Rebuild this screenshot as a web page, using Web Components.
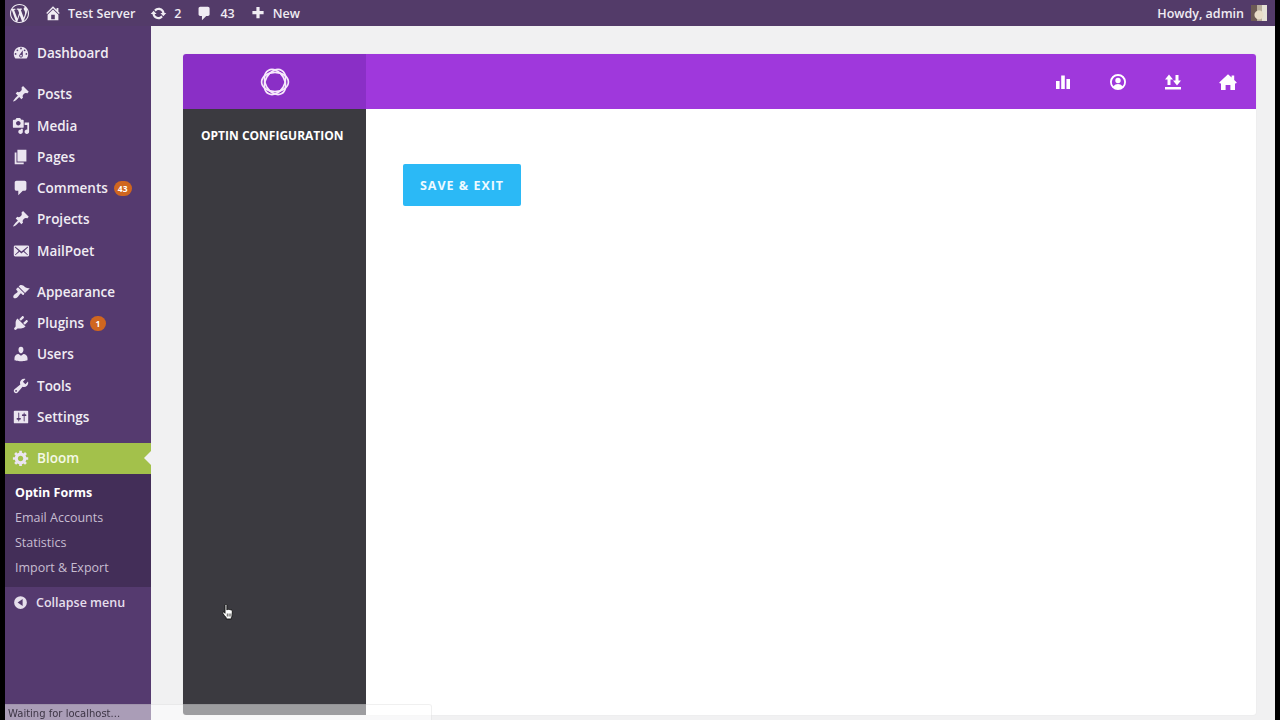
<!DOCTYPE html>
<html>
<head>
<meta charset="utf-8">
<title>Bloom - Optin Forms</title>
<style>
html, body { margin: 0; height: 100%; }
body { background: #000; overflow: hidden; }
</style>
</head>
<body>
<wp-shell>
  <wp-adminbar slot="bar"></wp-adminbar>
  <wp-sidemenu slot="menu"></wp-sidemenu>
  <bloom-panel slot="main"></bloom-panel>
</wp-shell>
<status-tip>Waiting for localhost...</status-tip>
<hand-cursor></hand-cursor>

<script>
const ICONS = {
  wp: 'M20 10c0-5.51-4.49-10-10-10C4.48 0 0 4.49 0 10c0 5.52 4.48 10 10 10 5.51 0 10-4.48 10-10zM7.78 15.37L4.37 6.22c.55-.02 1.17-.08 1.17-.08.5-.06.44-1.13-.06-1.11 0 0-1.45.11-2.37.11-.18 0-.37 0-.58-.01C4.12 2.69 6.87 1.11 10 1.11c2.33 0 4.45.87 6.05 2.34-.68-.11-1.65.39-1.65 1.58 0 .74.45 1.36.9 2.1.35.61.55 1.36.55 2.46 0 1.49-1.4 5-1.4 5l-3.03-8.37c.54-.02.82-.17.82-.17.5-.05.44-1.25-.06-1.22 0 0-1.44.12-2.38.12-.87 0-2.33-.12-2.33-.12-.5-.03-.56 1.2-.06 1.22l.92.08 1.26 3.41zM17.41 10c.24-.64.74-1.87.43-4.25.7 1.29 1.05 2.71 1.05 4.25 0 3.29-1.73 6.24-4.4 7.78.97-2.59 1.94-5.2 2.92-7.78zM6.1 18.09C3.12 16.65 1.11 13.53 1.11 10c0-1.3.23-2.48.72-3.59C3.25 10.3 4.67 14.2 6.1 18.09zm4.03-6.63l2.58 6.98c-.86.29-1.76.45-2.71.45-.79 0-1.57-.11-2.29-.33.81-2.38 1.62-4.74 2.42-7.1z',
  home: 'M16 8.5l1.53 1.53-1.06 1.06L10 4.62l-6.47 6.47-1.06-1.06L10 2.5l4 4v-2h2v4zm-6-2.46l6 5.99V18H4v-5.97zM12 17v-5H8v5h4z',
  update: 'M10.2 3.28c3.53 0 6.43 2.61 6.92 6h2.08l-3.5 4-3.5-4h2.32c-.45-1.97-2.21-3.45-4.32-3.45-1.45 0-2.73.71-3.54 1.78L4.95 5.66C6.23 4.2 8.11 3.28 10.2 3.28zm-.4 13.44c-3.52 0-6.43-2.61-6.92-6H.8l3.5-4c1.17 1.33 2.33 2.67 3.5 4H5.48c.45 1.97 2.21 3.45 4.32 3.45 1.45 0 2.73-.71 3.54-1.78l1.71 1.95c-1.28 1.46-3.15 2.38-5.25 2.38z',
  comment: 'M5 2h9c1.1 0 2 .9 2 2v7c0 1.1-.9 2-2 2h-2l-5 5v-5H5c-1.1 0-2-.9-2-2V4c0-1.1.9-2 2-2z',
  plus: 'M17 7.5v4h-5v5H8v-5H3v-4h5v-5h4v5z',
  dashboard: 'M3.76 16h12.48c1.1-1.37 1.76-3.11 1.76-5 0-4.42-3.58-8-8-8s-8 3.58-8 8c0 1.89.66 3.63 1.76 5zM10 4c.55 0 1 .45 1 1s-.45 1-1 1-1-.45-1-1 .45-1 1-1zM6 6c.55 0 1 .45 1 1s-.45 1-1 1-1-.45-1-1 .45-1 1-1zm8 0c.55 0 1 .45 1 1s-.45 1-1 1-1-.45-1-1 .45-1 1-1zm-5.37 5.55L12 7v6c0 1.1-.9 2-2 2s-2-.9-2-2c0-.57.24-1.08.63-1.45zM4 10c.55 0 1 .45 1 1s-.45 1-1 1-1-.45-1-1 .45-1 1-1zm12 0c.55 0 1 .45 1 1s-.45 1-1 1-1-.45-1-1 .45-1 1-1zm-5 3c0-.55-.45-1-1-1s-1 .45-1 1 .45 1 1 1 1-.45 1-1z',
  pin: 'M10.44 3.02l1.82-1.82 6.36 6.35-1.83 1.82c-1.05-.68-2.48-.57-3.41.36l-.75.75c-.92.93-1.04 2.35-.35 3.41l-1.83 1.82-2.41-2.41-2.8 2.79c-.42.42-3.38 2.71-3.8 2.29s1.86-3.39 2.28-3.81l2.79-2.79L4.1 9.36l1.83-1.82c1.05.69 2.48.57 3.4-.36l.75-.75c.93-.92 1.05-2.35.36-3.41z',
  media: 'M13 11V4c0-.55-.45-1-1-1h-1.67L9 1H5L3.67 3H2c-.55 0-1 .45-1 1v7c0 .55.45 1 1 1h10c.55 0 1-.45 1-1zM7 4.5c1.38 0 2.5 1.12 2.5 2.5S8.38 9.5 7 9.5 4.5 8.38 4.5 7 5.62 4.5 7 4.5zM14 6h5v10.5c0 1.38-1.12 2.5-2.5 2.5S14 17.88 14 16.5s1.12-2.5 2.5-2.5c.17 0 .34.02.5.05V9h-3V6zm-4 8.05V13h2v3.5c0 1.38-1.12 2.5-2.5 2.5S7 17.88 7 16.5 8.12 14 9.5 14c.17 0 .34.02.5.05z',
  page: 'M6 15V2h10v13H6zm-1 1h8v2H3V5h2v11z',
  mail: 'M19 14.5v-9c0-.83-.67-1.5-1.5-1.5H3.49c-.83 0-1.5.67-1.5 1.5v9c0 .83.67 1.5 1.5 1.5H17.5c.83 0 1.5-.67 1.5-1.5zm-1.31-9.11c.33.33.15.67-.03.84L13.6 9.95l3.9 4.06c.12.14.2.36.06.51-.13.16-.43.15-.56.05l-4.37-3.73-2.14 1.95-2.13-1.95-4.37 3.73c-.13.1-.43.11-.56-.05-.14-.15-.06-.37.06-.51l3.9-4.06-4.06-3.72c-.18-.17-.36-.51-.03-.84s.67-.17.95.07l6.24 5.04 6.25-5.04c.28-.24.62-.4.95-.07z',
  brush: 'M14.48 11.06L7.41 3.99l1.5-1.5c.5-.56 2.3-.47 3.51.32 1.21.8 1.43 1.28 2.91 2.1 1.18.64 2.45 1.26 4.45.85zm-.71.71L6.7 4.7 4.93 6.47c-.39.39-.39 1.02 0 1.41l1.06 1.06c.39.39.39 1.03 0 1.42-.6.6-1.43 1.11-2.21 1.69-.35.26-.7.53-1.01.84C1.43 13.71.96 15.65 1.91 16.6c.95.95 2.89.48 4.71-1.36.3-.3.58-.65.84-1 .58-.79 1.09-1.61 1.69-2.21.39-.39 1.02-.39 1.41 0l1.06 1.06c.39.39 1.02.39 1.41 0z',
  plug: 'M13.11 4.36L9.87 7.6 8 5.73l3.24-3.24c.35-.34 1.05-.2 1.56.32.52.51.66 1.21.31 1.55zm-8 1.77l.91-1.12 9.01 9.01-1.19.84c-.71.71-2.63 1.16-3.82 1.16H6.14L4.9 17.26c-.59.59-1.54.59-2.12 0-.59-.58-.59-1.53 0-2.12l1.24-1.24v-3.88c0-1.13.4-3.19 1.09-3.89zm7.26 3.97l3.24-3.24c.34-.35 1.04-.21 1.55.31.52.51.66 1.21.31 1.55l-3.24 3.25z',
  users: 'M10 9.25c-2.27 0-2.73-3.44-2.73-3.44C7 4.02 7.82 2 9.97 2c2.16 0 2.98 2.02 2.71 3.81 0 0-.41 3.44-2.68 3.44zm0 2.57L12.72 10c2.39 0 4.52 2.33 4.52 4.53v2.49s-3.65 1.13-7.24 1.13c-3.65 0-7.24-1.13-7.24-1.13v-2.49c0-2.25 1.94-4.48 4.47-4.48z',
  tools: 'M16.68 9.77c-1.34 1.34-3.3 1.67-4.95.99l-5.41 6.52c-.99.99-2.59.99-3.58 0s-.99-2.59 0-3.57l6.52-5.42c-.68-1.65-.35-3.61.99-4.95 1.28-1.28 3.12-1.62 4.72-1.06l-2.89 2.89 2.82 2.82 2.86-2.87c.53 1.58.18 3.39-1.08 4.65zM3.81 16.21c.4.39 1.04.39 1.43 0 .4-.4.4-1.04 0-1.43-.39-.4-1.03-.4-1.43 0-.39.39-.39 1.03 0 1.43z',
  settings: 'M18 16V4c0-.55-.45-1-1-1H3c-.55 0-1 .45-1 1v12c0 .55.45 1 1 1h14c.55 0 1-.45 1-1zM8 11h1c.55 0 1 .45 1 1s-.45 1-1 1H8v1.5c0 .28-.22.5-.5.5s-.5-.22-.5-.5V13H6c-.55 0-1-.45-1-1s.45-1 1-1h1V5.5c0-.28.22-.5.5-.5s.5.22.5.5V11zm5-2h-1c-.55 0-1-.45-1-1s.45-1 1-1h1V5.5c0-.28.22-.5.5-.5s.5.22.5.5V7h1c.55 0 1 .45 1 1s-.45 1-1 1h-1v5.5c0 .28-.22.5-.5.5s-.5-.22-.5-.5V9z',
  gear: 'M18 12h-2.18c-.17.7-.44 1.35-.81 1.93l1.54 1.54-2.1 2.1-1.54-1.54c-.58.36-1.23.63-1.91.79V19H8v-2.18c-.68-.16-1.33-.43-1.91-.79l-1.54 1.54-2.12-2.12 1.54-1.54c-.36-.58-.63-1.23-.79-1.91H1V9.03h2.17c.16-.7.44-1.35.8-1.94L2.43 5.55l2.1-2.1 1.54 1.54c.58-.37 1.24-.64 1.93-.81V2h3v2.18c.68.16 1.33.43 1.91.79l1.54-1.54 2.12 2.12-1.54 1.54c.36.59.64 1.24.8 1.94H18V12zm-8.5 1.5c1.66 0 3-1.34 3-3s-1.34-3-3-3-3 1.34-3 3 1.34 3 3 3z',
  collapse: 'M10 2.5a7.5 7.5 0 1 1 0 15 7.5 7.5 0 0 1 0-15zM12.5 5.8L6.6 10l5.9 4.2z',
  stats: 'M3 9h3.6v8H3zM8.2 3.5h3.6V17H8.2zM13.4 7h3.6v10h-3.6z',
  account: 'M10 2a8 8 0 1 1 0 16 8 8 0 0 1 0-16zm0 1.9a6.1 6.1 0 0 0-4.3 10.4c.9-1.5 2.5-2.3 4.3-2.3s3.4.8 4.3 2.3A6.1 6.1 0 0 0 10 3.9zm0 1.9a2.7 2.7 0 1 1 0 5.4 2.7 2.7 0 0 1 0-5.4z',
  updown: 'M6 2.5l4 5H7.5V13h-3V7.5H2zM14 13.5l-4-5h2.5V3h3v5.5H18zM2 15h16v2.6H2z',
  house: 'M10 2.2l3.6 3.4V3.6h2.6v4.5l2.6 2.5-1 1.1-.8-.6V18h-4.6v-5H7.6v5H3v-6.9l-.8.6-1-1.1z'
};

class WpIcon extends HTMLElement {
  connectedCallback() {
    const size = this.getAttribute('size') || 20;
    const d = ICONS[this.getAttribute('name')];
    this.attachShadow({ mode: 'open' });
    this.shadowRoot.innerHTML = `
      <style>
        :host { display: inline-flex; flex: none; width: ${size}px; height: ${size}px; color: inherit; }
        svg { width: 100%; height: 100%; display: block; fill: currentColor; }
      </style>
      <svg viewBox="0 0 20 20"><path fill-rule="evenodd" d="${d}"/></svg>`;
  }
}
customElements.define('wp-icon', WpIcon);

class WpShell extends HTMLElement {
  connectedCallback() {
    this.attachShadow({ mode: 'open' });
    this.shadowRoot.innerHTML = `
      <style>
        :host {
          display: grid;
          grid-template-columns: 146px 1fr;
          grid-template-rows: 26px 1fr;
          height: 720px;
          margin: 0 5px;
          background: #f1f1f2;
          font-family: "Open Sans", sans-serif;
        }
        .bar { grid-column: 1 / 3; display: flex; }
        .menu { display: flex; }
        .main { display: flex; min-width: 0; }
      </style>
      <div class="bar"><slot name="bar"></slot></div>
      <div class="menu"><slot name="menu"></slot></div>
      <div class="main"><slot name="main"></slot></div>`;
  }
}
customElements.define('wp-shell', WpShell);

class WpAdminbar extends HTMLElement {
  connectedCallback() {
    this.attachShadow({ mode: 'open' });
    this.shadowRoot.innerHTML = `
      <style>
        :host {
          display: flex;
          flex: 1;
          align-items: center;
          background: #533b69;
          color: #f0ecf3;
          font: 600 12.5px "Open Sans", sans-serif;
          padding: 0 8px 0 5px;
        }
        .it { display: flex; align-items: center; gap: 6px; white-space: nowrap; }
        .wp { margin-right: 15px; }
        .site { margin-right: 15px; gap: 6px; }
        .upd { margin-right: 15px; gap: 7px; }
        .com { margin-right: 15px; gap: 7px; }
        .new { gap: 7px; }
        .who { margin-left: auto; gap: 7px; }
        .avatar {
          width: 16px; height: 16px;
          background:
            radial-gradient(circle at 50% 62%, #e8dcc8 0 4px, transparent 5px),
            linear-gradient(90deg, #6d5a55 0 35%, #b9ad9c 35% 70%, #e6e1d6 70%);
        }
      </style>
      <div class="it wp"><wp-icon name="wp" size="19"></wp-icon></div>
      <div class="it site"><wp-icon name="home" size="18"></wp-icon><span>Test Server</span></div>
      <div class="it upd"><wp-icon name="update" size="17"></wp-icon><span>2</span></div>
      <div class="it com"><wp-icon name="comment" size="17"></wp-icon><span>43</span></div>
      <div class="it new"><wp-icon name="plus" size="16"></wp-icon><span>New</span></div>
      <div class="it who"><span>Howdy, admin</span><div class="avatar"></div></div>`;
  }
}
customElements.define('wp-adminbar', WpAdminbar);

class WpMenuItem extends HTMLElement {
  connectedCallback() {
    const badge = this.getAttribute('badge');
    const current = this.hasAttribute('current');
    this.attachShadow({ mode: 'open' });
    this.shadowRoot.innerHTML = `
      <style>
        :host {
          display: flex;
          align-items: center;
          position: relative;
          height: 31.25px;
          padding-left: 7px;
          color: #f0ecf3;
          font: 600 13.5px "Open Sans", sans-serif;
          white-space: nowrap;
        }
        :host([current]) { background: #a3c14b; color: #f4f8e6; }
        :host([gap]) { margin-bottom: 10px; }
        wp-icon { margin-right: 7px; color: #ebe5f0; }
        .badge {
          margin-left: 6px;
          min-width: 8px;
          height: 15px;
          padding: 0 4px;
          border-radius: 8px;
          background: #d0661f;
          color: #fff;
          font: 700 8.5px/15px "Open Sans", sans-serif;
          text-align: center;
        }
        .arrow {
          position: absolute;
          right: 0; top: 50%;
          margin-top: -7px;
          border: 7px solid transparent;
          border-right-color: #f1f1f2;
          border-left-width: 0;
        }
      </style>
      <wp-icon name="${this.getAttribute('icon')}" size="18"></wp-icon>
      <slot></slot>
      ${badge ? `<span class="badge">${badge}</span>` : ''}
      ${current ? '<span class="arrow"></span>' : ''}`;
  }
}
customElements.define('wp-menu-item', WpMenuItem);

class WpSubmenu extends HTMLElement {
  connectedCallback() {
    this.attachShadow({ mode: 'open' });
    this.shadowRoot.innerHTML = `
      <style>
        :host {
          display: block;
          background: #432e58;
          padding: 6px 0 7.5px;
          font: 400 12.5px "Open Sans", sans-serif;
          color: #c7bdd1;
        }
        .row { height: 25px; line-height: 25px; padding-left: 10px; white-space: nowrap; }
        .on { color: #fff; font-weight: 700; }
      </style>
      <div class="row on">Optin Forms</div>
      <div class="row">Email Accounts</div>
      <div class="row">Statistics</div>
      <div class="row">Import &amp; Export</div>`;
  }
}
customElements.define('wp-submenu', WpSubmenu);

class WpSidemenu extends HTMLElement {
  connectedCallback() {
    this.attachShadow({ mode: 'open' });
    this.shadowRoot.innerHTML = `
      <style>
        :host {
          display: block;
          flex: 1;
          background: #553a6f;
          padding-top: 11.5px;
        }
        .collapse {
          display: flex;
          align-items: center;
          gap: 7px;
          height: 31px;
          padding-left: 7px;
          color: #e6dfec;
          font: 600 12.5px "Open Sans", sans-serif;
        }
      </style>
      <wp-menu-item icon="dashboard" gap>Dashboard</wp-menu-item>
      <wp-menu-item icon="pin">Posts</wp-menu-item>
      <wp-menu-item icon="media">Media</wp-menu-item>
      <wp-menu-item icon="page">Pages</wp-menu-item>
      <wp-menu-item icon="comment" badge="43">Comments</wp-menu-item>
      <wp-menu-item icon="pin">Projects</wp-menu-item>
      <wp-menu-item icon="mail" gap>MailPoet</wp-menu-item>
      <wp-menu-item icon="brush">Appearance</wp-menu-item>
      <wp-menu-item icon="plug" badge="1">Plugins</wp-menu-item>
      <wp-menu-item icon="users">Users</wp-menu-item>
      <wp-menu-item icon="tools">Tools</wp-menu-item>
      <wp-menu-item icon="settings" gap>Settings</wp-menu-item>
      <wp-menu-item icon="gear" current>Bloom</wp-menu-item>
      <wp-submenu></wp-submenu>
      <div class="collapse"><wp-icon name="collapse" size="17"></wp-icon><span>Collapse menu</span></div>`;
  }
}
customElements.define('wp-sidemenu', WpSidemenu);

class BloomPanel extends HTMLElement {
  connectedCallback() {
    this.attachShadow({ mode: 'open' });
    this.shadowRoot.innerHTML = `
      <style>
        :host {
          display: grid;
          flex: 1;
          grid-template-columns: 183px 1fr;
          grid-template-rows: 55px 1fr;
          margin: 28px 19px 5px 32px;
          background: #fff;
          border-radius: 3px;
          overflow: hidden;
          font-family: "Open Sans", sans-serif;
          box-shadow: 0 0 2px rgba(0,0,0,.06);
        }
        .logo { display: flex; align-items: center; justify-content: center; background: #8a2fc6; }
        .top {
          display: flex;
          justify-content: flex-end;
          align-items: center;
          gap: 35px;
          padding-right: 18px;
          background: #9f38dc;
          color: #fff;
        }
        .side {
          background: #3b3a40;
          color: #fff;
          font-size: 12px;
          font-weight: 700;
          padding: 19px 0 0 18px;
          line-height: 16px;
          white-space: nowrap;
        }
        .body { padding: 55px 37px; }
        .save {
          width: 118px;
          height: 42px;
          border-radius: 2px;
          background: #2bb9f6;
          color: #eefaff;
          font-size: 12.5px;
          font-weight: 700;
          letter-spacing: 1px;
          display: flex;
          align-items: center;
          justify-content: center;
        }
      </style>
      <div class="logo">
        <svg width="32" height="32" viewBox="0 0 32 32" fill="none" stroke="#f6e9fb" stroke-width="1.7">
          <ellipse cx="16" cy="16" rx="13.4" ry="9.6"/>
          <ellipse cx="16" cy="16" rx="13.4" ry="9.6" transform="rotate(60 16 16)"/>
          <ellipse cx="16" cy="16" rx="13.4" ry="9.6" transform="rotate(120 16 16)"/>
        </svg>
      </div>
      <div class="top">
        <wp-icon name="stats" size="20"></wp-icon>
        <wp-icon name="account" size="20"></wp-icon>
        <wp-icon name="updown" size="20"></wp-icon>
        <wp-icon name="house" size="20"></wp-icon>
      </div>
      <div class="side">OPTIN CONFIGURATION</div>
      <div class="body"><div class="save">SAVE &amp; EXIT</div></div>`;
  }
}
customElements.define('bloom-panel', BloomPanel);

class StatusTip extends HTMLElement {
  connectedCallback() {
    this.attachShadow({ mode: 'open' });
    this.shadowRoot.innerHTML = `
      <style>
        :host {
          position: fixed;
          left: 5px; bottom: 0;
          width: 427px; height: 16px;
          box-sizing: border-box;
          padding-left: 3px;
          background: rgba(255,255,255,.5);
          border: solid rgba(0,0,0,.06);
          border-width: 1px 1px 0 0;
          border-top-right-radius: 3px;
          color: #3d3545;
          font: 400 10px/17px "DejaVu Sans", sans-serif;
          white-space: nowrap;
        }
      </style>
      <slot></slot>`;
  }
}
customElements.define('status-tip', StatusTip);

class HandCursor extends HTMLElement {
  connectedCallback() {
    this.attachShadow({ mode: 'open' });
    this.shadowRoot.innerHTML = `
      <style>
        :host { position: fixed; left: 222px; top: 604px; width: 12px; height: 16px; }
        svg { display: block; width: 100%; height: 100%; }
      </style>
      <svg viewBox="0 0 12 16">
        <path d="M3 1.2c0-1.2 1.9-1.2 1.9 0V6l.5-.3c.3-.6 1.5-.6 1.7.1.4-.5 1.5-.4 1.7.3.5-.3 1.5 0 1.5.9v3.5c0 1.6-.6 2.4-1 3.2V15H4.2v-1.2C3 12.300 1.500 10.500.8 9.300.3 8.500 1.200 7.500 2.100 8.300l.9 1z" fill="#fff" stroke="#111" stroke-width=".9" stroke-linejoin="round"/>
        <path d="M5.300 9.500v3M7.100 9.500v3M8.900 9.500v3" stroke="#111" stroke-width=".7"/>
      </svg>`;
  }
}
customElements.define('hand-cursor', HandCursor);
</script>
</body>
</html>
